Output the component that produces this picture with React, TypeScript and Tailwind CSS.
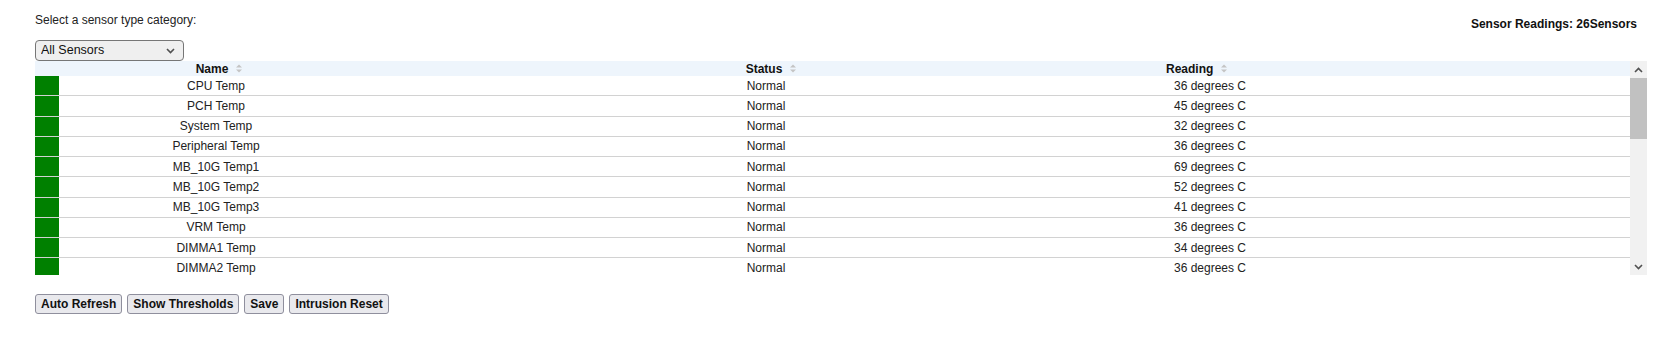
import React from "react";

const rows: { name: string; status: string; reading: string }[] = [
  { name: "CPU Temp", status: "Normal", reading: "36 degrees C" },
  { name: "PCH Temp", status: "Normal", reading: "45 degrees C" },
  { name: "System Temp", status: "Normal", reading: "32 degrees C" },
  { name: "Peripheral Temp", status: "Normal", reading: "36 degrees C" },
  { name: "MB_10G Temp1", status: "Normal", reading: "69 degrees C" },
  { name: "MB_10G Temp2", status: "Normal", reading: "52 degrees C" },
  { name: "MB_10G Temp3", status: "Normal", reading: "41 degrees C" },
  { name: "VRM Temp", status: "Normal", reading: "36 degrees C" },
  { name: "DIMMA1 Temp", status: "Normal", reading: "34 degrees C" },
  { name: "DIMMA2 Temp", status: "Normal", reading: "36 degrees C" },
];

function SortIcon() {
  return (
    <svg width="6" height="9" viewBox="0 0 6 9" className="ml-[8px] shrink-0">
      <polygon points="0,3.6 3,0.6 6,3.6" fill="#c4c4c4" />
      <polygon points="0,5.4 3,8.4 6,5.4" fill="#c4c4c4" />
    </svg>
  );
}

function Chevron({ up }: { up?: boolean }) {
  return (
    <svg width="9" height="6" viewBox="0 0 9 6">
      <polyline
        points={up ? "1,5 4.5,1.5 8,5" : "1,1 4.5,4.5 8,1"}
        fill="none"
        stroke="#505050"
        strokeWidth="1.6"
      />
    </svg>
  );
}

export default function App() {
  return (
    <div className="w-[1667px] h-[349px] bg-white font-['Liberation_Sans',Arial,sans-serif] text-[12px] text-[#222] pt-[13px] pl-[35px] pr-[20px]">
      <div className="flex justify-between items-start">
        <div className="flex flex-col">
          <div className="leading-[14px]">Select a sensor type category:</div>
          <div className="relative mt-[13px] w-[149px] h-[21px]">
            <select className="appearance-none w-full h-full bg-[#efefef] border border-[#767676] rounded-[4px] pl-[5px] text-[12.5px] leading-[19px] text-[#111] outline-none">
              <option>All Sensors</option>
              <option>Temperature</option>
              <option>Voltage</option>
              <option>Fan</option>
            </select>
            <div className="pointer-events-none absolute right-[9px] top-[8px]">
              <Chevron />
            </div>
          </div>
        </div>
        <div className="mt-[4px] mr-[10px] font-bold leading-[14px] text-[#111]">
          Sensor Readings: 26Sensors
        </div>
      </div>

      <div className="flex h-[214px]">
        <div className="flex-1 overflow-hidden flex flex-col">
          <div className="flex h-[15px] shrink-0 items-center bg-[#eef5fc] font-bold text-[#111]">
            <div className="w-[24px]" />
            <div className="w-[314px] flex items-center justify-center pl-[6px]">
              <span>Name</span>
              <SortIcon />
            </div>
            <div className="w-[786px] flex items-center justify-center pl-[10px]">
              <span>Status</span>
              <SortIcon />
            </div>
            <div className="w-[93px] flex items-center pl-[7px] whitespace-nowrap">
              <span>Reading</span>
              <SortIcon />
            </div>
            <div className="flex-1" />
          </div>
          {rows.map((r) => (
            <div
              key={r.name}
              className="flex h-[20.25px] shrink-0 border-b border-[#d2d2d2] items-stretch"
            >
              <div className="w-[24px] bg-[#008000]" />
              <div className="w-[314px] flex items-center justify-center">{r.name}</div>
              <div className="w-[786px] flex items-center justify-center">{r.status}</div>
              <div className="w-[93px] flex items-center justify-end pr-[6px] whitespace-nowrap">
                {r.reading}
              </div>
              <div className="flex-1" />
            </div>
          ))}
        </div>
        <div className="w-[17px] h-full bg-[#f1f1f1] flex flex-col">
          <div className="h-[17px] flex items-center justify-center">
            <Chevron up />
          </div>
          <div className="h-[61px] bg-[#c1c1c1]" />
          <div className="flex-1" />
          <div className="h-[17px] flex items-center justify-center">
            <Chevron />
          </div>
        </div>
      </div>

      <div className="flex gap-[5px] mt-[19px]">
        {["Auto Refresh", "Show Thresholds", "Save", "Intrusion Reset"].map((label) => (
          <button
            key={label}
            className="h-[20px] px-[5px] whitespace-nowrap bg-[#e9e9ed] border border-[#8f8f9d] rounded-[3px] font-bold text-[12px] leading-[18px] text-[#111] flex items-center justify-center"
          >
            {label}
          </button>
        ))}
      </div>
    </div>
  );
}
